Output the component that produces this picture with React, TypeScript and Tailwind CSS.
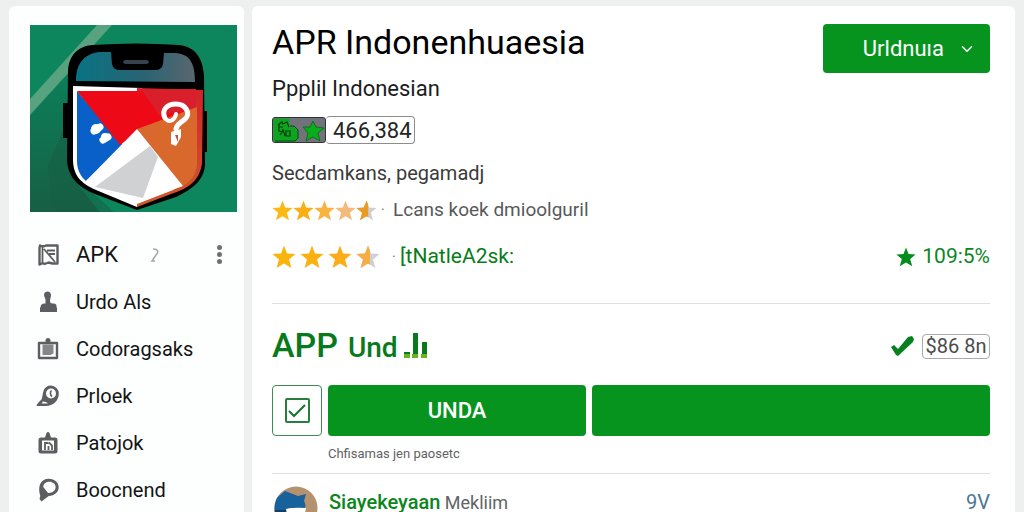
import type { ReactNode } from 'react'
import { ChevronDown } from 'lucide-react'

const STAR = 'M12 .5l3 8 8.500.5-6.500 5.500L19.500 23 12 18.500 4.500 23 7 14.500.5 9 9 8.500z'

const navItems: { label: string; icon: ReactNode }[] = [
  {
    label: 'APK',
    icon: (
      <>
        <path d="M4 2.500c2 1 4 1 6 0h11.500v18h-5l-4-1-4 1.500c-1.500-1.500-3-.5-5 .5V5z" fill="none" stroke="currentColor" strokeWidth="2.400" strokeLinejoin="round" />
        <path d="M6.500 4v16M8 6l11 13M11 7.500h8M13 11h6" fill="none" stroke="currentColor" strokeWidth="1.800" />
      </>
    ),
  },
  {
    label: 'Urdo Als',
    icon: <path d="M11.500 1.500c2.200 0 3.500 1.600 3.500 3.700 0 2-1 3.300-1 5.800 0 1.600.8 2.500 2.500 2.500H18c1.500 0 2.500 1 2.500 2.500v1.500h.5V22H4v-4.500h.5c0-2.500 1.500-4 4-4h1V10C9.500 8 8 7 8 5c0-2.100 1.400-3.500 3.500-3.500z" />,
  },
  {
    label: 'Codoragsaks',
    icon: (
      <>
        <path d="M3 6h18v15H3z" fill="none" stroke="currentColor" strokeWidth="2.400" strokeLinejoin="round" />
        <path d="M9.500 5.500V3.500a2.500 2.500 0 015 0v2z" />
        <path d="M6.500 7.500h11v9l-3 1.500h-8z" opacity=".75" />
      </>
    ),
  },
  {
    label: 'Prloek',
    icon: (
      <>
        <path fillRule="evenodd" d="M15 1.500a8 8 0 017.800 8C22.800 17 17 22 10 22H.5c.2-2 2-3.500 5-6.500C6.500 13 6.500 10 7.500 7A8 8 0 0115 1.500zm0 3a5 5 0 100 10 5 5 0 000-10zM7 17.500l-1.500 2H12l-2-1.500z" />
        <path d="M15.500 6.500c-1.500 1.500-1.500 4.500.5 6" fill="none" stroke="currentColor" strokeWidth="1.600" />
      </>
    ),
  },
  {
    label: 'Patojok',
    icon: (
      <>
        <path fillRule="evenodd" d="M9 6.500L10.500 2a1.700 1.700 0 013 0L15 6.500h4A2.500 2.500 0 0121.500 9v11a2.500 2.500 0 01-2.500 2.500H5A2.500 2.500 0 012.500 20V9A2.500 2.500 0 015 6.500zM6 9.500v10h12v-10z" />
        <path d="M9 19v-7h3.500M13 11.500l3 3V19M12.500 15v4" fill="none" stroke="currentColor" strokeWidth="1.800" />
      </>
    ),
  },
  {
    label: 'Boocnend',
    icon: (
      <path fillRule="evenodd" d="M13 .8c5.500 0 9.700 3.700 9.700 8.400 0 5-4 8.300-10 8.800L5.500 23.500l-2-2.500.8-3C1.500 9 4 .8 13 .8zm.3 3c-3.800 0-6 2.500-6 5.200L12 15c4 .3 7.600-2.200 7.600-5.700 0-3.200-2.700-5.500-6.300-5.500z" />
    ),
  },
]

function Star({ fill, className }: { fill: string; className: string }) {
  return (
    <svg viewBox="0 0 24 24" fill={fill} className={className} aria-hidden="true">
      <path d={STAR} />
    </svg>
  )
}

function HalfStar({ fill, className }: { fill: string; className: string }) {
  return (
    <svg viewBox="0 0 24 24" className={className} aria-hidden="true">
      <path d={STAR} fill="#d0d0d2" />
      <path d="M12 .5l2 5V19.700l-2-1.200L4.500 23 7 14.500.5 9 9 8.500z" fill={fill} />
    </svg>
  )
}

function AppLogo() {
  return (
    <svg viewBox="0 0 207 187" className="block w-full" role="img" aria-label="APR Indonenhuaesia">
      <defs>
        <linearGradient id="screen">
          <stop offset="0" stopColor="#087383" />
          <stop offset=".55" stopColor="#286474" />
          <stop offset="1" stopColor="#59666f" />
        </linearGradient>
        <linearGradient id="shade" x1="0" y1="0" x2="0" y2="1">
          <stop offset="0" stopColor="#0b8059" />
          <stop offset="1" stopColor="#175f45" />
        </linearGradient>
        <linearGradient id="rim" x1="0" y1="0" x2="0" y2="1">
          <stop offset="0" stopColor="#d3222a" />
          <stop offset="1" stopColor="#cf5a2b" />
        </linearGradient>
      </defs>
      <path d="M0 0h207v187H0z" fill="#0d865d" />
      <path d="M0 90L40 45v105l30 37H0z" fill="url(#shade)" />
      <path d="M18 140l4 47h62l-44-40V90z" fill="#155d43" opacity=".5" />
      <path d="M67 0h15L0 90V74z" fill="#57a27f" />
      <path d="M33 78h6v35h-6zM172 86h5v41h-5z" />
      <path d="M63 20q43-3 86 0c18 2 24 15 25 31l1 89c-1 15-12 24-29 32l-39 13-42-16c-19-8-27-18-28-34l1-89c1-15 9-25 25-26z" />
      <path d="M46 56c0-16 7-27 23-29h12l1 12q1 6 8 6h35q7 0 8-6l1-11h11c15 1 20 10 20 29z" fill="url(#screen)" />
      <path d="M95 35h22q4 2 0 4H95q-4-2 0-4z" fill="#36434f" />
      <path d="M43 61l69 2v108l-5 11-41-17c-16-7-23-15-23-31z" fill="#fff" />
      <path d="M107 63l66 2-1 73c-2 18-15 26-31 31l-34 13z" fill="url(#rim)" />
      <path d="M107 166l46-9-10 8-36 14-4-2z" fill="#fff" />
      <path d="M47 66l46 54-37 36c-6-5-9-12-9-20z" fill="#0960c9" />
      <path d="M47 66h119v18l-59 24-17 12z" fill="#ed0915" />
      <path d="M111 64h55v20l-37 6z" fill="#d91f2c" />
      <path d="M167 82v58c-1 10-7 17-14 21l-46-57z" fill="#d8682b" />
      <path d="M107 104l46 57-46 17-51-22z" fill="#fff" />
      <path d="M120 121l8 11-15 41-48-11z" fill="#d0d1d2" />
      <circle cx="66" cy="104" r="5" fill="#fff" />
      <circle cx="75" cy="112" r="4" fill="#fff" />
      <path d="M64 106l6-4M73 115l5-3" stroke="#fff" strokeWidth="7" strokeLinecap="round" />
      <path d="M135 93c-4-8 2-14 11-14 10 0 14 9 10 14-3 4-9 5-10 11" fill="none" stroke="#fff" strokeWidth="5" strokeLinecap="round" />
      <path d="M135 93c4 6 10 2 11-4" fill="none" stroke="#fff" strokeWidth="4" strokeLinecap="round" />
      <path d="M141 107l10-3v8l-5 9-5-2z" fill="#fff" />
      <path d="M145 110h3v7z" fill="#c34d2d" />
    </svg>
  )
}

function Sidebar() {
  return (
    <aside className="w-[235px] shrink-0 rounded-t-md bg-[#fdfefe] pt-[19px] pl-[21px] pr-[7px]">
      <AppLogo />
      <nav className="pt-[19px]">
        {navItems.map((item, i) => (
          <div key={item.label} className="flex h-[47px] items-center">
            <a href="#" className={`flex items-center gap-4 pl-1.5 text-[#141414] ${i === 0 ? 'text-[22px]' : 'text-[20px]'}`}>
              <svg viewBox="0 0 24 24" fill="currentColor" className="size-6 text-[#5c5f61]" aria-hidden="true">
                {item.icon}
              </svg>
              {item.label}
            </a>
            {i === 0 && (
              <>
                <svg viewBox="0 0 10 14" className="ml-8 h-3.5 w-2.5" fill="none" stroke="#a5a5a5" strokeWidth="1.500" aria-hidden="true">
                  <path d="M3 1c5 0 6 3 3 6l-4 6h3" />
                </svg>
                <button type="button" aria-label="Menu" className="ml-auto mr-2 flex w-5 flex-col items-center gap-0.5">
                  <span className="size-[5px] rounded-full bg-[#707070]" />
                  <span className="size-[5px] rounded-full bg-[#707070]" />
                  <span className="size-[5px] rounded-full bg-[#707070]" />
                </button>
              </>
            )}
          </div>
        ))}
      </nav>
    </aside>
  )
}

function Ratings() {
  return (
    <>
      <div className="mt-[9px] flex h-7 items-center">
        <div className="flex">
          <Star fill="#fbb914" className="size-[21px]" />
          <Star fill="#faae14" className="size-[21px]" />
          <Star fill="#f8b43e" className="size-[21px]" />
          <Star fill="#f3ba7d" className="size-[21px]" />
          <HalfStar fill="#ea9b25" className="size-[21px]" />
        </div>
        <span className="ml-1 w-3 text-sm text-gray-500">·</span>
        <span className="text-[19px] text-[#58595b]">Lcans koek dmioolguril</span>
      </div>
      <div className="mt-[19px] flex h-7 items-center">
        <div className="flex gap-1">
          <Star fill="#fbb40c" className="size-6" />
          <Star fill="#fbb012" className="size-6" />
          <Star fill="#faad18" className="size-6" />
          <HalfStar fill="#f5ad45" className="size-6" />
        </div>
        <span className="ml-3 w-2 text-sm text-gray-500">·</span>
        <a href="#" className="text-[21px] text-[#087c19]">[tNatleA2sk:</a>
        <span className="ml-auto flex items-center gap-1.5 text-[21px] text-[#0b861d]">
          <Star fill="#058c1c" className="size-5" />
          109:5%
        </span>
      </div>
    </>
  )
}

export default function App() {
  return (
    <div className="flex h-screen gap-2 overflow-hidden bg-[#eeefef] px-[9px] pt-1.5 font-['Roboto','Liberation_Sans',sans-serif]">
      <Sidebar />
      <main className="min-w-0 flex-1 rounded-t-md bg-white pt-[18px] pr-[25px] pl-5">
        <header className="flex items-start justify-between">
          <div>
            <h1 className="text-[34px] leading-9 text-black">APR Indonenhuaesia</h1>
            <p className="mt-[15px] text-[22px] leading-7 text-[#1c1c1c]">Ppplil Indonesian</p>
          </div>
          <button type="button" aria-haspopup="menu" className="flex h-[49px] w-[167px] items-center justify-end gap-3.5 rounded bg-[#06941f] pr-3.5 text-[22px] text-white">
            Urldnuıa
            <ChevronDown className="size-[18px]" />
          </button>
        </header>

        <div className="mt-[13px] flex h-7 items-center">
          <svg viewBox="0 0 54 26" className="h-[26px] w-[54px]" aria-hidden="true">
            <rect x=".5" y=".5" width="53" height="25" rx="2.500" fill="#70747a" stroke="#333" />
            <path d="M1.500 1.500h16v9l3-1 6 4v8l-3 3h-22z" fill="#0da51f" />
            <path d="M18 9h4l4 4v8l-3 3H3" fill="none" stroke="#084912" />
            <path d="M6 8l4-3 1 2 4-2 2 5M7 7v7l4 1M8 18l3-5 2 6M14 13v6h4v-5h-3M7 10h4" fill="none" stroke="#063d0c" strokeWidth="1.200" />
            <path d="M41 4l3 6 8 1-6 5 2 8-7-4-7 4 2-8-5-6h7z" fill="#08ad1c" stroke="#0a5713" strokeWidth=".7" />
          </svg>
          <span className="flex h-7 items-center rounded border border-l-0 border-[#8d8d8d] pr-0.5 pl-[7px] text-[22px] text-[#252525]">466,384</span>
        </div>
        <p className="mt-[15px] text-[20px] leading-7 text-[#3b3b3b]">Secdamkans, pegamadj</p>
        <Ratings />

        <section className="mt-8 border-t border-[#dedfe1] pt-6">
          <div className="flex h-9 items-center">
            <h2 className="flex items-baseline gap-2.5 text-[#087a1b]">
              <span className="text-[34px] leading-9 font-medium">APP</span>
              <span className="text-[28px] leading-9 font-medium">Und</span>
            </h2>
            <svg viewBox="0 0 24 26" className="ml-1.5 h-[26px] w-6" aria-hidden="true">
              <path d="M0 19h6v6H0zM9 0h5v25H9zM18 9h5v16h-5z" fill="#087a1b" />
              <path d="M0 21h6v4H0zM8 21h6v4H8zM17 21h6v4h-6z" fill="#68b51b" />
            </svg>
            <svg viewBox="0 0 24 22" className="ml-auto h-[22px] w-6" aria-hidden="true">
              <path d="M1 12l3-2 4 4L18 2l4-1 2 3-1 3L8 21l-2-1z" fill="#078021" />
            </svg>
            <span className="ml-2 flex h-[25px] w-[68px] items-center justify-center rounded border border-[#aaa] text-[20px] text-[#4b4b4b]">$86 8n</span>
          </div>

          <div className="mt-[21px] flex h-[51px] gap-1.5">
            <label className="relative flex w-[50px] shrink-0 items-center justify-center rounded border border-[#3f8a50]">
              <input type="checkbox" defaultChecked aria-label="UNDA" className="peer size-[25px] appearance-none rounded-xs border-2 border-[#287f3c]" />
              <svg viewBox="0 0 18 14" className="absolute hidden h-3.5 w-[18px] peer-checked:block" fill="none" stroke="#17752d" strokeWidth="2" aria-hidden="true">
                <path d="M1 7l5 5L17 1" />
              </svg>
            </label>
            <button type="button" className="flex-[258] rounded bg-[#06941f] text-[22px] font-medium text-white">UNDA</button>
            <button type="button" aria-label="UNDA" className="flex-[398] rounded bg-[#06941f]" />
          </div>
          <p className="mt-2.5 pl-14 text-[13px] leading-4 text-[#626262]">Chfisamas jen paosetc</p>
        </section>

        <section className="mt-[11px] flex border-t border-[#dedfe1] pt-3 pl-0.5">
          <svg viewBox="0 0 44 44" className="size-11 shrink-0" aria-hidden="true">
            <defs>
              <clipPath id="avatar">
                <circle cx="22" cy="22" r="21.500" />
              </clipPath>
            </defs>
            <g clipPath="url(#avatar)">
              <path d="M0 0h44v44H0z" fill="#b49270" />
              <path d="M0 14L11 5l13 5 8-2-2 7q3 5 0 8l-16-1-2 5H0z" fill="#17629a" />
              <path d="M0 24h12l6 20H0z" fill="#153d62" />
              <path d="M12 23q8-2 20-1l-1 5-18 1z" fill="#fff" />
              <path d="M13 27q10 3 19-1v18H12z" fill="#243341" />
            </g>
          </svg>
          <p className="ml-[11px] text-[18px] leading-8 text-[#626365]">
            <a href="#" className="text-[20px] font-medium text-[#0b861d]">Siayekeyaan</a> Mekliim
          </p>
          <span className="mt-1.5 ml-auto text-[20px] leading-5 text-[#4b7694]">9V</span>
        </section>
      </main>
    </div>
  )
}
